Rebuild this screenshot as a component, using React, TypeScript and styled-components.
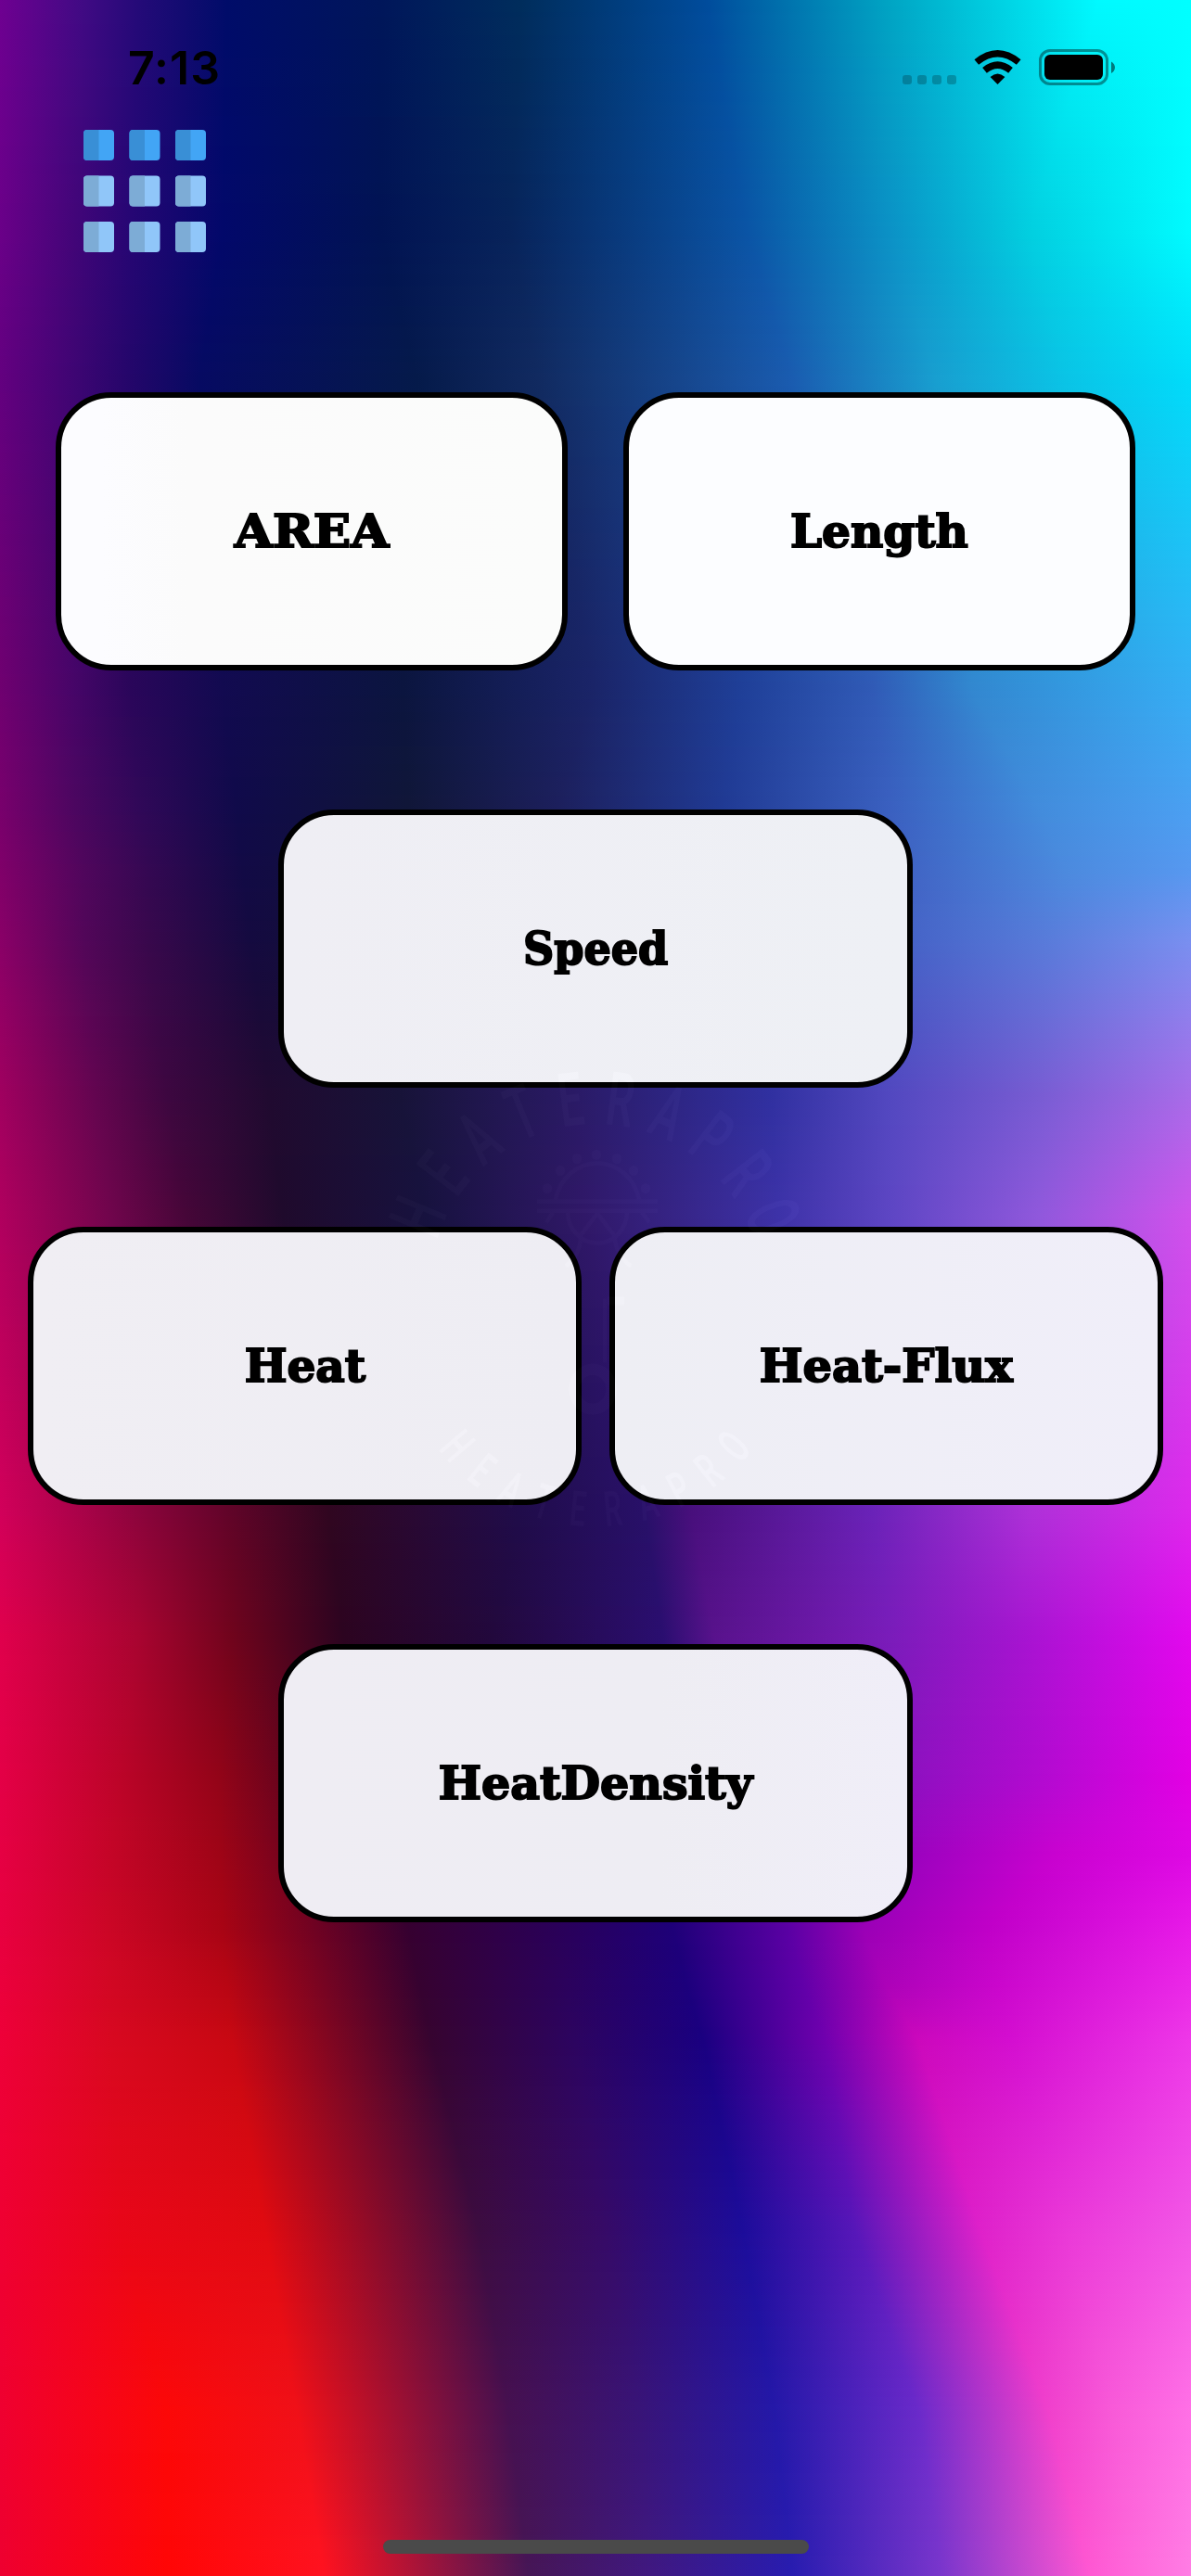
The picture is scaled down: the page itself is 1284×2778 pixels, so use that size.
import React, { useLayoutEffect, useRef } from "react";
import styled, { createGlobalStyle } from "styled-components";

const WIDTH = 1284;
const HEIGHT = 2778;

type Stop = [number, string];
type Row = { y: number; stops: Stop[] };

/* Every row lists the same ten colour ridges, so ridges bend smoothly between rows. */
const MESH: Row[] = [
  { y: 0, stops: [[0, "#6e0091"], [90, "#400a84"], [150, "#240a78"], [245, "#000c69"], [410, "#00165a"], [562, "#002d5c"], [762, "#004c9c"], [960, "#00a5c4"], [1185, "#00faff"], [1284, "#00ffff"]] },
  { y: 250, stops: [[0, "#6a0088"], [80, "#420578"], [140, "#260674"], [240, "#02086a"], [410, "#011353"], [550, "#07235a"], [805, "#0a54a5"], [960, "#0b92c6"], [1110, "#02cfe0"], [1284, "#00fbff"]] },
  { y: 410, stops: [[0, "#63007f"], [80, "#3e0573"], [140, "#24066a"], [215, "#060a62"], [450, "#051a4a"], [580, "#112a60"], [855, "#1a5cb0"], [1010, "#189fd0"], [1150, "#0ac4e6"], [1284, "#00dcfa"]] },
  { y: 740, stops: [[0, "#6f0070"], [80, "#460568"], [140, "#2a065a"], [240, "#120a50"], [435, "#0b153f"], [640, "#1a2468"], [800, "#1f3f98"], [940, "#305ab6"], [1045, "#3287cf"], [1284, "#35aef4"]] },
  { y: 870, stops: [[0, "#78006c"], [80, "#4c0660"], [150, "#300858"], [255, "#100a4a"], [440, "#101638"], [600, "#1c1f5c"], [780, "#203a94"], [960, "#3a60c0"], [1120, "#428cdc"], [1284, "#4aa0f2"]] },
  { y: 940, stops: [[0, "#800069"], [90, "#50065c"], [160, "#340852"], [262, "#120a45"], [430, "#111538"], [600, "#1e1e5e"], [785, "#233894"], [965, "#3f61c2"], [1150, "#4c8ade"], [1284, "#5798f0"]] },
  { y: 1010, stops: [[0, "#890067"], [90, "#520659"], [160, "#38084c"], [270, "#140a40"], [420, "#121538"], [600, "#201c60"], [790, "#263695"], [970, "#4462c6"], [1130, "#587cda"], [1284, "#7890f0"]] },
  { y: 1180, stops: [[0, "#a0005f"], [100, "#640550"], [180, "#3d0740"], [290, "#200a30"], [430, "#171338"], [620, "#2a1a66"], [830, "#3030a0"], [960, "#5248c0"], [1120, "#785cd3"], [1284, "#a86ce9"]] },
  { y: 1310, stops: [[0, "#b0005e"], [120, "#70054c"], [200, "#460638"], [305, "#1f0a2c"], [460, "#17123f"], [630, "#301868"], [840, "#3d32a8"], [960, "#5e46c4"], [1120, "#9058dc"], [1284, "#d052ec"]] },
  { y: 1630, stops: [[0, "#d2005a"], [150, "#8c043c"], [250, "#600428"], [355, "#300620"], [560, "#200c4a"], [695, "#281068"], [745, "#480f7c"], [940, "#6a22b8"], [1110, "#ae30d8"], [1284, "#dd28ec"]] },
  { y: 1765, stops: [[0, "#e0004c"], [150, "#a80430"], [250, "#70041c"], [370, "#2c0420"], [530, "#22083c"], [715, "#2a0e70"], [770, "#58128c"], [960, "#7a1cba"], [1100, "#a514d0"], [1284, "#e208ee"]] },
  { y: 1920, stops: [[0, "#e40046"], [130, "#bc0428"], [235, "#940418"], [400, "#300222"], [560, "#26044e"], [715, "#240874"], [830, "#7010a8"], [980, "#8e10c0"], [1120, "#b20ad0"], [1284, "#e200e4"]] },
  { y: 2000, stops: [[0, "#e60043"], [120, "#c40527"], [238, "#9e0416"], [420, "#330129"], [580, "#280253"], [718, "#210476"], [845, "#6a08a8"], [980, "#9a02be"], [1140, "#c902d0"], [1284, "#de08e4"]] },
  { y: 2080, stops: [[0, "#e80040"], [115, "#cc0626"], [240, "#a80414"], [440, "#360030"], [600, "#2a0058"], [725, "#1e0078"], [850, "#5a00a4"], [930, "#9a00b6"], [1065, "#c000c8"], [1284, "#e81ae8"]] },
  { y: 2140, stops: [[0, "#eb003c"], [118, "#d20723"], [245, "#b80613"], [452, "#360230"], [610, "#2b025c"], [740, "#1c007c"], [865, "#6000a8"], [955, "#ac02b8"], [1075, "#ca06cc"], [1284, "#eb28e8"]] },
  { y: 2200, stops: [[0, "#ee0038"], [120, "#d80820"], [250, "#c80812"], [465, "#360430"], [620, "#2c0460"], [758, "#1a0080"], [890, "#7000ae"], [990, "#cc08bc"], [1090, "#d40ed0"], [1284, "#ee38e8"]] },
  { y: 2400, stops: [[0, "#ef0032"], [130, "#e80618"], [285, "#e00a10"], [515, "#3c0c40"], [650, "#360a66"], [800, "#1c0c9a"], [920, "#5616b8"], [1055, "#de20ca"], [1150, "#ea38d8"], [1284, "#f256e6"]] },
  { y: 2600, stops: [[0, "#ef0030"], [180, "#fc0808"], [320, "#f01018"], [548, "#461050"], [690, "#381478"], [835, "#2418a8"], [990, "#6a2aca"], [1130, "#f040cc"], [1200, "#f85ad8"], [1284, "#ff70e6"]] },
  { y: 2778, stops: [[0, "#ee0030"], [180, "#ff0606"], [350, "#ff1220"], [570, "#461656"], [700, "#401880"], [855, "#281cb0"], [1015, "#7a36cc"], [1175, "#ff58d2"], [1220, "#ff68da"], [1284, "#ff7de4"]] },
];

const channels = (hex: string) => [1, 3, 5].map((i) => parseInt(hex.slice(i, i + 2), 16));
const mix = (a: number, b: number, t: number) => a + (b - a) * t;

function paintMesh(ctx: CanvasRenderingContext2D) {
  for (let r = 0; r < MESH.length - 1; r++) {
    const top = MESH[r];
    const bottom = MESH[r + 1];
    for (let y = top.y; y < bottom.y; y++) {
      const t = (y - top.y) / (bottom.y - top.y);
      const gradient = ctx.createLinearGradient(0, 0, WIDTH, 0);
      top.stops.forEach(([x, color], i) => {
        const [x2, color2] = bottom.stops[i];
        const a = channels(color);
        const b = channels(color2);
        const rgb = a.map((c, k) => Math.round(mix(c, b[k], t)));
        gradient.addColorStop(mix(x, x2, t) / WIDTH, `rgb(${rgb.join(",")})`);
      });
      ctx.fillStyle = gradient;
      ctx.fillRect(0, y, WIDTH, 1);
    }
  }
}

const GlobalStyle = createGlobalStyle`
  html, body { margin: 0; padding: 0; background: #000; }
`;

const Screen = styled.div`
  position: relative;
  isolation: isolate;
  display: flex;
  flex-direction: column;
  box-sizing: border-box;
  width: ${WIDTH}px;
  height: ${HEIGHT}px;
  overflow: hidden;
`;

const Wallpaper = styled.canvas`
  position: absolute;
  inset: 0;
  z-index: -1;
  display: block;
`;

const StatusBar = styled.header`
  display: flex;
  justify-content: space-between;
  align-items: center;
  box-sizing: border-box;
  height: 140px;
  padding: 5px 81px 0 138px;
`;

const Clock = styled.time`
  font: 600 50px/60px Inter, "Liberation Sans", sans-serif;
  letter-spacing: 1px;
  color: #000;
`;

const Indicators = styled.div`
  display: flex;
  align-items: center;
`;

const Toolbar = styled.nav`
  display: flex;
  height: 133px;
  padding-left: 90px;
`;

const MenuButton = styled.button`
  display: block;
  width: 133px;
  height: 133px;
  padding: 0;
  border: 0;
  background: none;
`;

const Converters = styled.main`
  display: flex;
  flex-direction: column;
  gap: 150px;
  margin-top: 150px;
`;

const ConverterRow = styled.div<{ $gap?: number }>`
  display: flex;
  justify-content: center;
  gap: ${(p) => p.$gap ?? 0}px;
`;

const ConverterButton = styled.button<{ $width: number; $fill: string }>`
  display: flex;
  align-items: center;
  justify-content: center;
  box-sizing: border-box;
  width: ${(p) => p.$width}px;
  height: 300px;
  padding: 0;
  border: 6px solid #000;
  border-radius: 60px;
  background: ${(p) => p.$fill};
`;

const Label = styled.span<{ $stretch: number }>`
  font-family: "DejaVu Serif", serif;
  font-weight: 700;
  font-size: 49px;
  line-height: 60px;
  transform: scaleX(${(p) => p.$stretch});
  color: #000;
  -webkit-text-stroke: 2px #000;
  stroke-linejoin: round;
`;

const Footer = styled.footer`
  display: flex;
  justify-content: center;
  margin-top: auto;
  padding-bottom: 24px;
`;

const HomeIndicator = styled.div`
  width: 459px;
  height: 15px;
  border-radius: 8px;
  background: #4a4a4a;
`;

const Emblem = styled.svg`
  position: absolute;
  left: 400px;
  top: 1120px;
  pointer-events: none;
  mix-blend-mode: plus-lighter;
  opacity: 0.016;
`;

const EmblemLetter = styled.text`
  font-family: Roboto, "Liberation Sans", sans-serif;
  font-weight: 500;
  fill: #fff;
  text-anchor: middle;
`;

const BRAND = "HEATERAPRO".split("");

function BrandEmblem() {
  return (
    <Emblem width="500" height="540" viewBox="400 1120 500 540" aria-hidden="true">
      {BRAND.map((letter, i) => (
        <EmblemLetter
          key={`t${i}`}
          fontSize={80}
          transform={`translate(642 1391) rotate(${(i - 4.5) * 15}) translate(0 -179) scale(.58 1)`}
        >
          {letter}
        </EmblemLetter>
      ))}
      {BRAND.map((letter, i) => (
        <EmblemLetter
          key={`b${i}`}
          fontSize={52}
          transform={`translate(642 1432) rotate(${(4.5 - i) * 11}) translate(0 214) scale(.58 1)`}
        >
          {letter}
        </EmblemLetter>
      ))}
      <g transform="translate(0 -80) scale(1 1.0714)" opacity=".7">
        <g fill="none" stroke="#fff" strokeWidth="4">
          <path d="M579 1284H709M579 1293.500H709M599 1282A46 46 0 0 1 689 1282" />
          <path d="M612 1294A32 32 0 0 0 676 1294M644 1296L626 1318M644 1296L662 1318M596 1295L589 1305M692 1295L700 1305" />
          <path d="M626 1318Q626 1338 610 1349M662 1318Q664 1338 680 1349M652 1382V1446" />
          <circle cx="639" cy="1473" r="20" strokeWidth="11" />
          <path d="M655 1384H673" strokeWidth="8" />
        </g>
        <g fill="#fff">
          {[[643, 1237], [622, 1241], [665, 1241], [604, 1253], [683, 1253], [590, 1271], [696, 1271]].map(([cx, cy]) => (
            <circle key={cx} cx={cx} cy={cy} r="5" />
          ))}
        </g>
      </g>
    </Emblem>
  );
}

function StatusIcons() {
  return (
    <svg width="230" height="40" viewBox="973 53 230 40" aria-hidden="true">
      {[973, 989, 1005, 1021].map((x) => (
        <rect key={x} x={x} y="81" width="10" height="10" rx="3" fill="#000" opacity=".22" />
      ))}
      <path d="M1075.500 91L1067.600 83Q1075.500 76 1083.400 83Z" />
      <g fill="none" stroke="#000" strokeWidth="7.400">
        <path d="M1061.500 75.800Q1075.500 64.500 1089.500 75.800" />
        <path d="M1052.800 67Q1075.500 48.500 1098.200 67" />
      </g>
      <rect x="1121.500" y="54.500" width="72" height="36" rx="10.500" fill="none" stroke="#000" strokeWidth="3" opacity=".4" />
      <rect x="1126" y="59" width="63" height="27" rx="6" />
      <path d="M1198 66.500C1203.300 69 1203.300 76.500 1198 79Z" opacity=".5" />
    </svg>
  );
}

function GridIcon() {
  const offsets = [0, 49.5, 99];
  return (
    <svg width="133" height="133" viewBox="0 0 133 133" aria-hidden="true">
      {offsets.map((y, row) =>
        offsets.map((x) => (
          <g key={`${x}-${y}`} transform={`translate(${x} ${y})`}>
            <rect width="33" height="33" rx="4" fill={row === 0 ? "#42a5f5" : "#90c6f9"} />
            <path d="M4 0H16.500V33H4Q0 33 0 29V4Q0 0 4 0Z" fill={row === 0 ? "#398fd6" : "#7dacd6"} />
          </g>
        ))
      )}
    </svg>
  );
}

const ROWS = [
  { gap: 60, items: [
    { name: "AREA", width: 552, fill: "linear-gradient(90deg, #fcfcff 8%, #fbfbfb 25%, #fbfcfb)", stretch: 1.08 },
    { name: "Length", width: 552, fill: "#fcfdff", stretch: 0.99 },
  ] },
  { items: [{ name: "Speed", width: 684, fill: "linear-gradient(90deg, #efeef4, #eef0f5)", stretch: 0.94 }] },
  { gap: 30, items: [
    { name: "Heat", width: 597, fill: "linear-gradient(90deg, #f0eef3, #eeedf3)", stretch: 0.99 },
    { name: "Heat-Flux", width: 597, fill: "linear-gradient(90deg, #eeeef4, #f0eef9)", stretch: 1.01 },
  ] },
  { items: [{ name: "HeatDensity", width: 684, fill: "linear-gradient(90deg, #efedf3, #eeedf3 60%, #f0eef8)", stretch: 1 }] },
];

export default function App() {
  const wallpaper = useRef<HTMLCanvasElement>(null);

  useLayoutEffect(() => {
    const ctx = wallpaper.current?.getContext("2d");
    if (ctx) paintMesh(ctx);
  }, []);

  return (
    <>
      <GlobalStyle />
      <Screen>
        <Wallpaper ref={wallpaper} width={WIDTH} height={HEIGHT} />
        <StatusBar>
          <Clock>7:13</Clock>
          <Indicators>
            <StatusIcons />
          </Indicators>
        </StatusBar>
        <Toolbar>
          <MenuButton aria-label="Menu">
            <GridIcon />
          </MenuButton>
        </Toolbar>
        <Converters>
          {ROWS.map((row, i) => (
            <ConverterRow key={i} $gap={row.gap}>
              {row.items.map((item) => (
                <ConverterButton key={item.name} $width={item.width} $fill={item.fill}>
                  <Label $stretch={item.stretch}>{item.name}</Label>
                </ConverterButton>
              ))}
            </ConverterRow>
          ))}
        </Converters>
        <Footer>
          <HomeIndicator />
        </Footer>
        <BrandEmblem />
      </Screen>
    </>
  );
}
